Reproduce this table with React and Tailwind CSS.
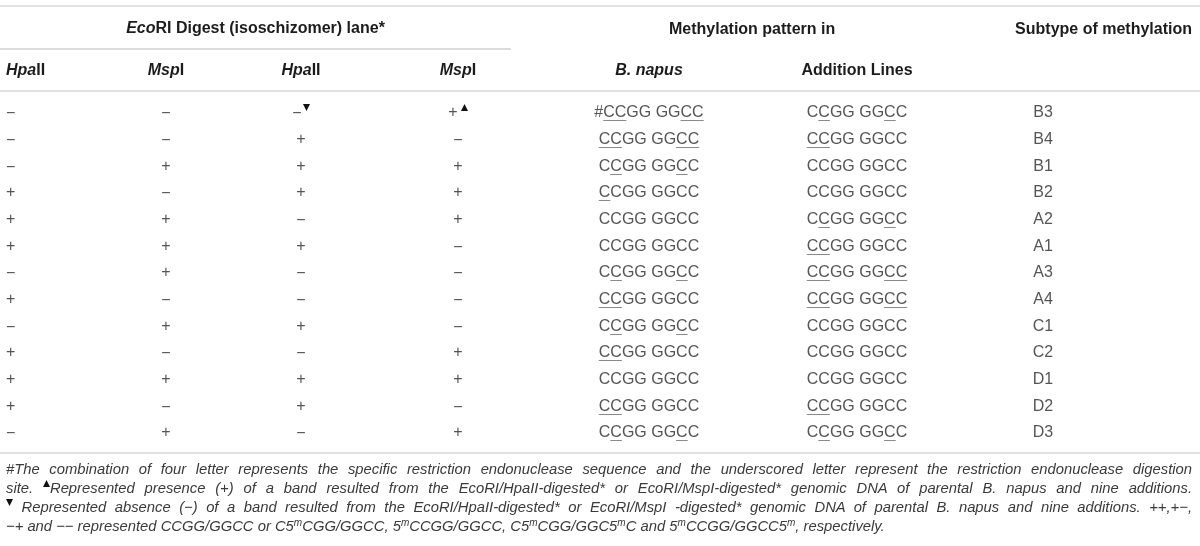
import React from "react";

const rows = [
  ["−", "−", "−d", "+u", "#[CC]GG GG[CC]", "C[C]GG GG[C]C", "B3"],
  ["−", "−", "+", "−", "[CC]GG GG[CC]", "[CC]GG GGCC", "B4"],
  ["−", "+", "+", "+", "C[C]GG GG[C]C", "CCGG GGCC", "B1"],
  ["+", "−", "+", "+", "[C]CGG GGCC", "CCGG GGCC", "B2"],
  ["+", "+", "−", "+", "CCGG GGCC", "C[C]GG GG[C]C", "A2"],
  ["+", "+", "+", "−", "CCGG GGCC", "[CC]GG GGCC", "A1"],
  ["−", "+", "−", "−", "C[C]GG GG[C]C", "[CC]GG GG[CC]", "A3"],
  ["+", "−", "−", "−", "[CC]GG GGCC", "[CC]GG GG[CC]", "A4"],
  ["−", "+", "+", "−", "C[C]GG GG[C]C", "CCGG GGCC", "C1"],
  ["+", "−", "−", "+", "[CC]GG GGCC", "CCGG GGCC", "C2"],
  ["+", "+", "+", "+", "CCGG GGCC", "CCGG GGCC", "D1"],
  ["+", "−", "+", "−", "[CC]GG GGCC", "[CC]GG GGCC", "D2"],
  ["−", "+", "−", "+", "C[C]GG GG[C]C", "C[C]GG GG[C]C", "D3"],
];

function Up() {
  return (
    <svg width="7" height="7" viewBox="0 0 7 7" className="inline-block align-[6px]">
      <path d="M3.5 0 L7 7 L0 7 Z" fill="#111" />
    </svg>
  );
}
function Down() {
  return (
    <svg width="7" height="7" viewBox="0 0 7 7" className="inline-block align-[6px]">
      <path d="M0 0 L7 0 L3.5 7 Z" fill="#111" />
    </svg>
  );
}

function Minus() {
  return <span className="inline-block translate-y-[1px]">−</span>;
}

function Sym({ v }) {
  if (v === "−d")
    return (
      <span>
        <Minus />
        <span className="ml-[1px]"><Down /></span>
      </span>
    );
  if (v === "+u")
    return (
      <span>
        +<span className="ml-[3px]"><Up /></span>
      </span>
    );
  if (v === "−") return <Minus />;
  return <span>{v}</span>;
}

function Seq({ s }) {
  const parts = s.split(/(\[[^\]]+\])/).filter((p) => p !== "");
  return (
    <span>
      {parts.map((p, i) =>
        p.startsWith("[") ? (
          <span
            key={i}
            className="underline decoration-[#8a8a8a] decoration-1 underline-offset-[3px]"
          >
            {p.slice(1, -1)}
          </span>
        ) : (
          <span key={i}>{p}</span>
        )
      )}
    </span>
  );
}

export default function App() {
  const grid =
    "grid grid-cols-[90px_152px_118px_196px_186px_230px_142px_86px]";
  return (
    <div className="w-[1200px] h-[546px] bg-white font-['Liberation_Sans',Arial,sans-serif] pt-[5px] overflow-hidden [will-change:transform]">
      <div className="border-t-2 border-[#e2e2e2]">
        {/* header row 1 */}
        <div className={`${grid} h-[43px] text-[16px] font-bold text-[#1c1c1c]`}>
          <div className="col-span-4">
            <div className="w-[511px] h-[43px] border-b-2 border-[#dcdcdc] flex items-center justify-center">
              <span>
                <i>Eco</i>RI Digest (isoschizomer) lane*
              </span>
            </div>
          </div>
          <div className="col-span-2 flex items-center pl-[113px]">
            Methylation pattern in
          </div>
          <div className="col-span-2 flex items-center justify-end pr-[8px]">
            Subtype of methylation
          </div>
        </div>
        {/* header row 2 */}
        <div
          className={`${grid} h-[42px] items-center text-[16px] font-bold text-[#1c1c1c] border-b-2 border-[#e2e2e2]`}
        >
          <div className="pl-[6px]">
            <i>Hpa</i>II
          </div>
          <div className="text-center">
            <i>Msp</i>I
          </div>
          <div className="text-center">
            <i>Hpa</i>II
          </div>
          <div className="text-center">
            <i>Msp</i>I
          </div>
          <div className="text-center italic">B. napus</div>
          <div className="text-center">Addition Lines</div>
          <div />
          <div />
        </div>
        {/* body */}
        <div className="pt-[7px] pb-[6px] border-b-2 border-[#e2e2e2] text-[16px] text-[#555]">
          {rows.map((r, i) => (
            <div key={i} className={`${grid} h-[26.67px] items-center`}>
              <div className="pl-[6px]">
                <Sym v={r[0]} />
              </div>
              <div className="text-center">
                <Sym v={r[1]} />
              </div>
              <div className="text-center">
                <Sym v={r[2]} />
              </div>
              <div className="text-center">
                <Sym v={r[3]} />
              </div>
              <div className="text-center">
                <Seq s={r[4]} />
              </div>
              <div className="text-center">
                <Seq s={r[5]} />
              </div>
              <div className="text-center">{r[6]}</div>
              <div />
            </div>
          ))}
        </div>
        {/* footer */}
        <div className="pt-[6px] pl-[6px] pr-[8px] text-[14.8px] leading-[19.3px] italic text-[#3a3a3a]">
          <div className="text-justify [text-align-last:justify] whitespace-nowrap">
            #The combination of four letter represents the specific restriction endonuclease sequence and the underscored letter represent the restriction endonuclease digestion
          </div>
          <div className="text-justify [text-align-last:justify] whitespace-nowrap">
            site. <Up />Represented presence (+) of a band resulted from the EcoRI/HpaII-digested* or EcoRI/MspI-digested* genomic DNA of parental B. napus and nine additions.
          </div>
          <div className="text-justify [text-align-last:justify] whitespace-nowrap">
            <Down /> Represented absence (−) of a band resulted from the EcoRI/HpaII-digested* or EcoRI/MspI -digested* genomic DNA of parental B. napus and nine additions. ++,+−,
          </div>
          <div className="whitespace-nowrap">
            −+ and −− represented CCGG/GGCC or C5<sup className="text-[10px]">m</sup>CGG/GGCC, 5
            <sup className="text-[10px]">m</sup>CCGG/GGCC, C5<sup className="text-[10px]">m</sup>CGG/GGC5
            <sup className="text-[10px]">m</sup>C and 5<sup className="text-[10px]">m</sup>CCGG/GGCC5
            <sup className="text-[10px]">m</sup>, respectively.
          </div>
        </div>
      </div>
    </div>
  );
}
